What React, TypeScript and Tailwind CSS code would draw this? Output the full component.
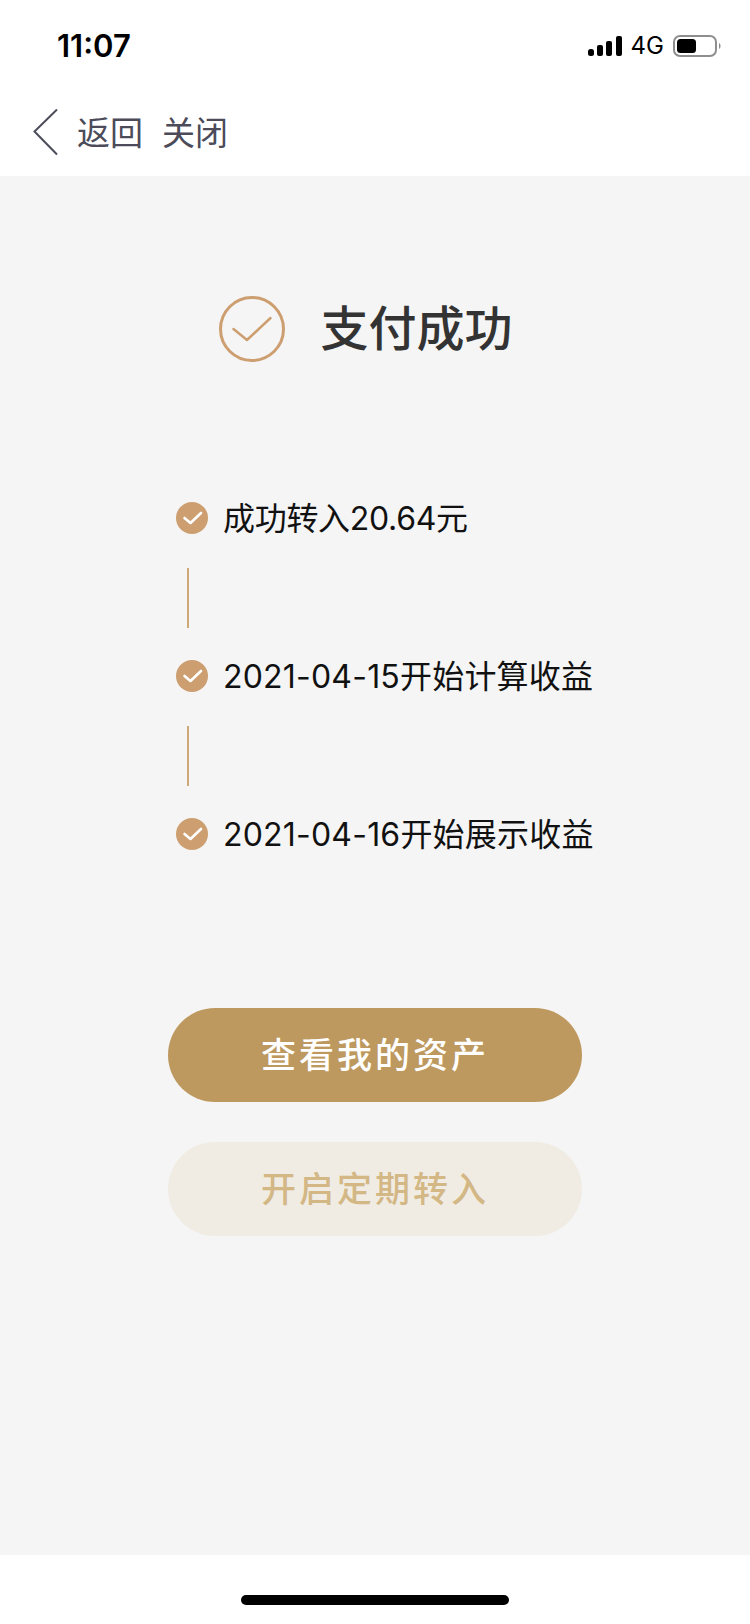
const cjk = "font-['Inter','Noto_Sans_CJK_SC',sans-serif]";

function SmallCheck() {
  return (
    <div className="flex h-8 w-8 shrink-0 items-center justify-center rounded-full bg-[#cd9f70]">
      <svg width="32" height="32" viewBox="0 0 32 32" fill="none">
        <path d="M8.5 16 L14.5 21 L25 11" stroke="#fff" strokeWidth="2.6" strokeLinecap="round" strokeLinejoin="round" />
      </svg>
    </div>
  );
}

function Step({ text, tight }: { text: string; tight?: boolean }) {
  return (
    <div className="flex h-8 items-center gap-[15px]">
      <SmallCheck />
      <span className={`mt-[1px] text-[32px] leading-8 text-[#111] whitespace-nowrap ${tight ? "tracking-[-0.3px]" : "tracking-[0.2px]"}`}>{text}</span>
    </div>
  );
}

function Connector() {
  return <div className="mb-[32px] ml-[11px] mt-[34px] h-[60px] w-[2px] bg-[#cfa877]" />;
}

export default function App() {
  return (
    <div className={`flex h-[1624px] w-[750px] flex-col bg-white ${cjk}`}>
      <div className="flex h-[90px] shrink-0 items-start justify-between pl-[57px] pr-[27px] pt-[26px]">
        <span className="text-[31px] font-semibold leading-[40px] text-black">11:07</span>
        <div className="flex items-center pt-[8px]">
          <svg width="34" height="22" viewBox="0 0 34 22" fill="#000">
            <rect x="0" y="14" width="6" height="7" rx="2.5" />
            <rect x="9" y="10" width="6" height="11" rx="2" />
            <rect x="18" y="6" width="6" height="15" rx="2" />
            <rect x="28" y="1" width="6" height="20" rx="2" />
          </svg>
          <span className="ml-[9px] text-[24px] leading-[24px] text-black">4G</span>
          <svg className="ml-[9px]" width="50" height="24" viewBox="0 0 50 24" fill="none">
            <rect x="1" y="2" width="42" height="20" rx="6" stroke="#8e8e8e" strokeWidth="2" />
            <rect x="4" y="5" width="19" height="14" rx="3.5" fill="#000" />
            <path d="M46 9 C48 10 48 14 46 15 Z" fill="#8e8e8e" />
          </svg>
        </div>
      </div>
      <div className="flex h-[86px] shrink-0 items-center pl-[33px]">
        <svg width="25" height="48" viewBox="0 0 25 48" fill="none">
          <path d="M24 0.5 L1.5 22.5 L24 45.5" stroke="#4b4b5a" strokeWidth="2" />
        </svg>
        <span className="ml-[19px] text-[33px] leading-10 text-[#4b4b5a]">返回</span>
        <span className="ml-[19px] text-[33px] leading-10 text-[#4b4b5a]">关闭</span>
      </div>
      <main className="flex flex-1 flex-col items-center bg-[#f5f5f5]">
        <div className="mr-[18px] mt-[120px] flex h-[66px] items-center">
          <svg width="66" height="66" viewBox="0 0 66 66" fill="none">
            <circle cx="33" cy="33" r="31.5" stroke="#cd9f70" strokeWidth="3" />
            <path d="M14.5 33 L28 44 L51.5 22" stroke="#cd9f70" strokeWidth="2.5" strokeLinecap="round" strokeLinejoin="round" />
          </svg>
          <h1 className="ml-[35px] text-[48px] font-medium leading-[66px] text-[#333]">支付成功</h1>
        </div>
        <div className="mt-[140px] flex w-[398px] flex-col">
          <Step text="成功转入20.64元" tight />
          <Connector />
          <Step text="2021-04-15开始计算收益" />
          <Connector />
          <Step text="2021-04-16开始展示收益" />
        </div>
        <button className="mt-[158px] flex h-[94px] w-[414px] items-center justify-center rounded-full bg-[#bd995f] text-[35px] font-medium tracking-[3px] text-white">
          查看我的资产
        </button>
        <button className="mt-[40px] flex h-[94px] w-[414px] items-center justify-center rounded-full bg-[#f0ece4] text-[35px] font-medium tracking-[3px] text-[#d3b785]">
          开启定期转入
        </button>
      </main>
      <div className="flex h-[69px] shrink-0 items-end justify-center pb-[19px]">
        <div className="h-[10px] w-[268px] rounded-full bg-black" />
      </div>
    </div>
  );
}
